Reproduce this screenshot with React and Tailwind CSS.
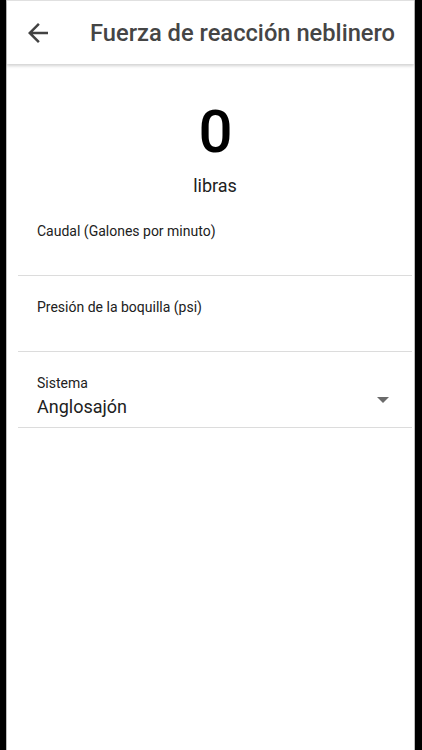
import React from 'react';

// Back arrow, same geometry as the Material "arrow_back" glyph
const BackArrow = () => (
    <svg width="30" height="30" viewBox="0 0 24 24" fill="#424242">
        <path d="M20 11H7.83l5.59-5.59L12 4l-8 8 8 8 1.41-1.41L7.83 13H20v-2z" />
    </svg>
);

const Field = ({ label }) => (
    <div className="pt-[21px]">
        <div className="pl-[30px] text-[14px] leading-[20px] text-[#212121]">{label}</div>
        <div className="h-[34px]" />
        <div className="ml-[11px] mr-[2px] h-px bg-[#dcdcdc]" />
    </div>
);

const App = () => {
    return (
        <div className="flex h-[750px] w-[422px] bg-black px-[6px]" style={{ fontFamily: 'Roboto, "Noto Sans", sans-serif' }}>
            <div className="flex w-[409px] flex-col border-x border-[#bdbdbd] bg-white">
                {/* Toolbar */}
                <div className="relative flex h-16 items-center border-t border-[#e0e0e0] bg-white shadow-[0_2px_3px_rgba(0,0,0,0.18)]">
                    <div className="ml-[16px] flex h-[30px] w-[30px] items-center justify-center">
                        <BackArrow />
                    </div>
                    <h1 className="ml-[37px] mt-[2px] text-[23.7px] font-medium leading-none text-[#454545]">Fuerza de reacción neblinero</h1>
                </div>

                {/* Result */}
                <div className="mt-[38px] pl-[10px] text-center text-[60px] font-medium leading-none text-black">0</div>
                <div className="mt-[12px] pl-[9px] text-center text-[18px] leading-[24px] text-[#212121]">libras</div>

                <div className="mt-[2px]">
                    <Field label="Caudal (Galones por minuto)" />
                    <Field label="Presión de la boquilla (psi)" />
                </div>

                {/* Unit system selector */}
                <div className="pt-[21px]">
                    <div className="flex items-end pl-[30px] pr-[25px]">
                        <div className="flex-1">
                            <div className="text-[14px] leading-[20px] text-[#212121]">Sistema</div>
                            <div className="mt-[2px] text-[18px] leading-[24px] text-[#212121]">Anglosajón</div>
                        </div>
                        <div className="mb-[16px] h-0 w-0 border-x-[6px] border-t-[6px] border-x-transparent border-t-[#6b6b6b]" />
                    </div>
                    <div className="mt-[8px] ml-[11px] mr-[2px] h-px bg-[#dcdcdc]" />
                </div>
            </div>
        </div>
    );
};

export default App;
